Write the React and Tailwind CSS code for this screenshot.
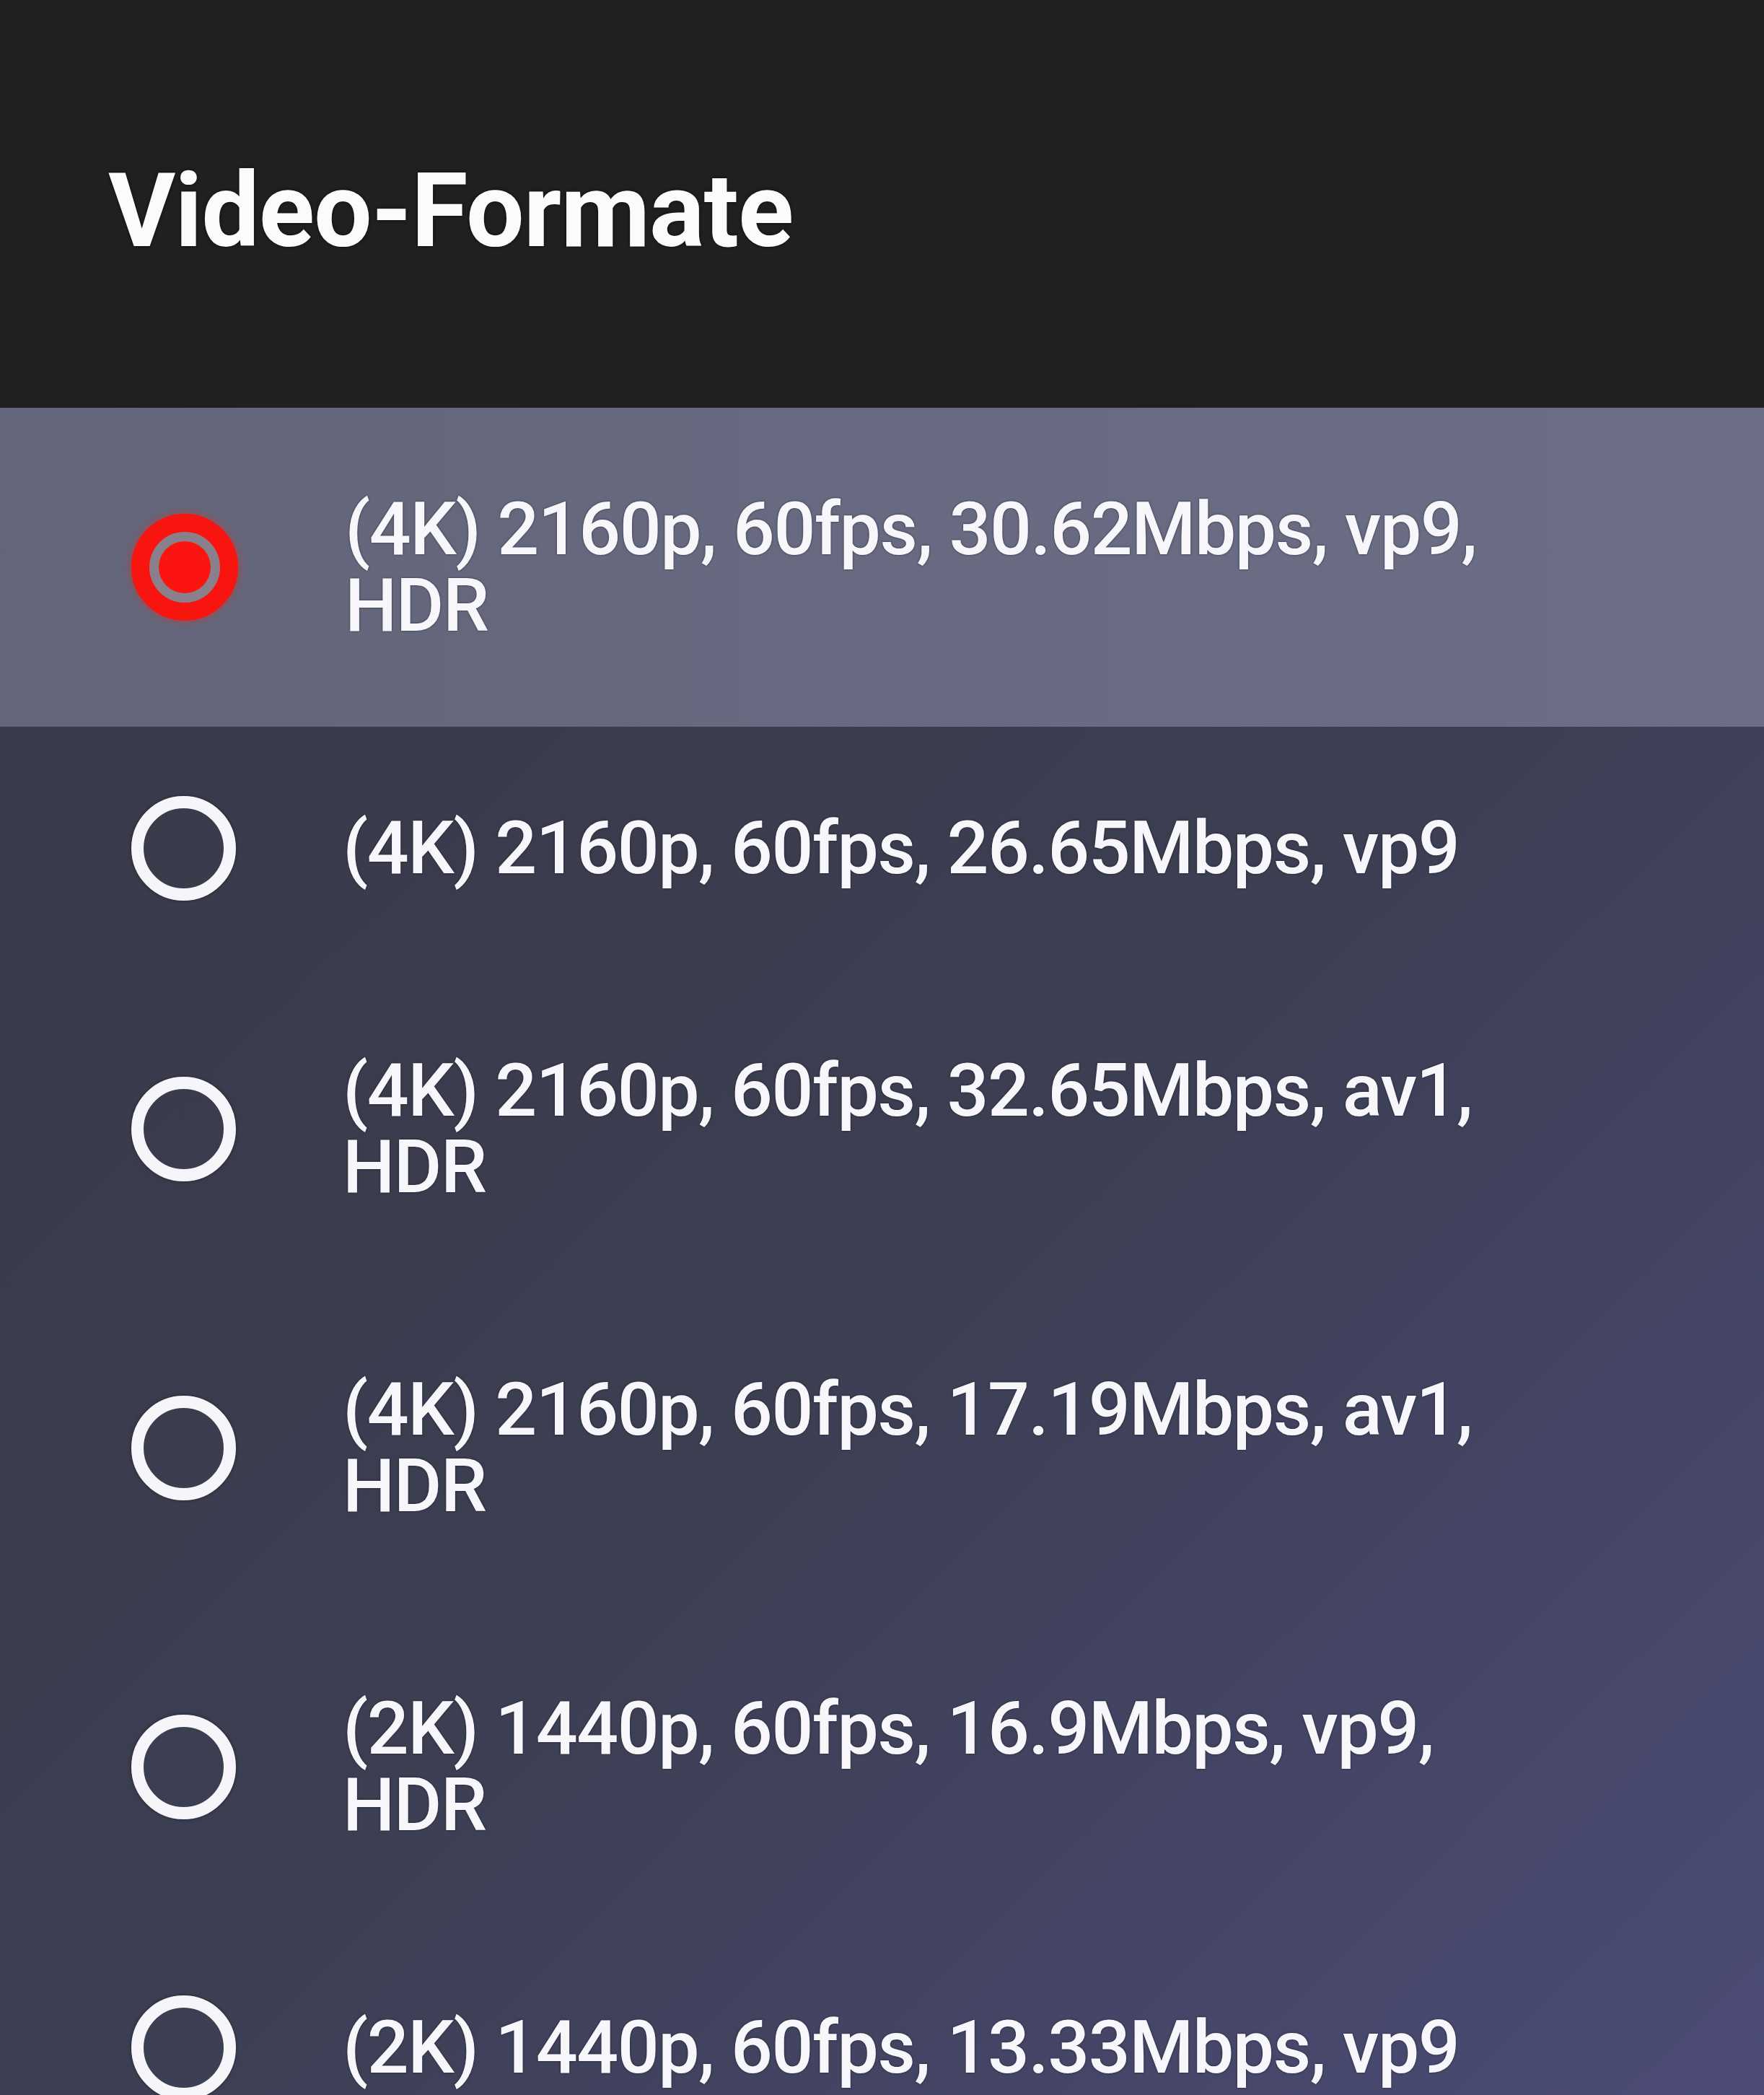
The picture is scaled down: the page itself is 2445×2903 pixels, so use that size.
const formats = [
  { label: "(4K) 2160p, 60fps, 30.62Mbps, vp9, HDR", selected: true },
  { label: "(4K) 2160p, 60fps, 26.65Mbps, vp9" },
  { label: "(4K) 2160p, 60fps, 32.65Mbps, av1, HDR" },
  { label: "(4K) 2160p, 60fps, 17.19Mbps, av1, HDR" },
  { label: "(2K) 1440p, 60fps, 16.9Mbps, vp9, HDR" },
  { label: "(2K) 1440p, 60fps, 13.33Mbps, vp9" },
]

function Radio({ checked }) {
  if (checked) {
    return (
      <div className="w-[148px] h-[148px] shrink-0 rounded-full border-[25px] border-[#f8140f] bg-[#8a7f8a] flex items-center justify-center shadow-[0_0_12px_rgba(255,30,20,0.55)]">
        <div className="w-[72px] h-[72px] rounded-full bg-[#fb1410]" />
      </div>
    )
  }
  return (
    <div className="w-[145px] h-[145px] shrink-0 rounded-full border-[17px] border-[#f6f6fa] shadow-[0_0_4px_rgba(0,0,0,0.5)]" />
  )
}

function FormatRow({ label, selected }) {
  return (
    <div
      className={
        "flex items-center pl-[182px] " +
        (selected ? "bg-linear-to-r from-[#63667a] to-[#6b6e86]" : "")
      }
    >
      <Radio checked={selected} />
      <div className="ml-[148px] w-[1650px] py-[115px] text-[102px] leading-[106px] font-medium text-[#f7f7fb] tracking-[-1.5px] [text-shadow:0_0_3px_rgba(0,0,0,0.55)]">
        {label}
      </div>
    </div>
  )
}

export default function App() {
  return (
    <div
      className="w-full h-[2903px] overflow-hidden flex flex-col bg-[#222024]"
      style={{ fontFamily: "Roboto, 'Noto Sans', sans-serif" }}
    >
      <div className="h-[565px] shrink-0 flex items-center pl-[150px] pt-[20px] bg-[#221f23]">
        <h1 className="text-[143px] font-bold leading-none text-[#fbfbfd] tracking-[-1px] [text-shadow:0_0_4px_rgba(0,0,0,0.7)]">
          Video-Formate
        </h1>
      </div>
      <div className="flex-1 flex flex-col bg-linear-to-br from-[#383a48] via-[#3c3e52] to-[#4c4c78]">
        {formats.map(f => (
          <FormatRow key={f.label} {...f} />
        ))}
      </div>
    </div>
  )
}
